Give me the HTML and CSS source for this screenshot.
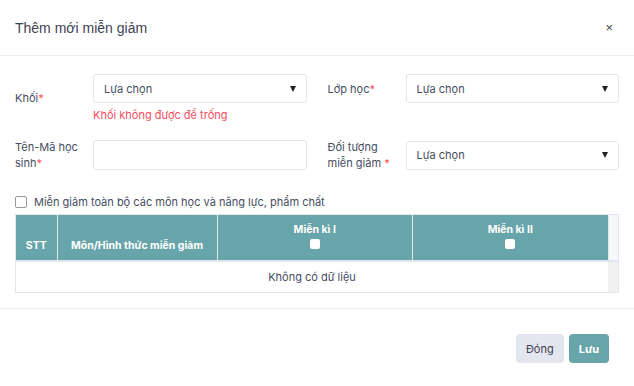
FILE: index.html
```html
<!DOCTYPE html>
<html lang="vi">
<head>
    <meta charset="UTF-8">
    <meta name="viewport" content="width=device-width, initial-scale=1.0">
    <title>Thêm mới miễn giảm</title>
    <link rel="stylesheet" href="styles.css">
</head>
<body>
    <div class="modal">
        <div class="modal-header">
            <h5 class="modal-title">Thêm mới miễn giảm</h5>
            <span class="close">×</span>
        </div>

        <div class="modal-body">
            <div class="form-row">
                <div class="field">
                    <label class="field-label required">Khối</label>
                    <div class="field-control">
                        <div class="select">Lựa chọn <span class="caret"></span></div>
                        <div class="error">Khối không được để trống</div>
                    </div>
                </div>
                <div class="field">
                    <label class="field-label required">Lớp học</label>
                    <div class="field-control">
                        <div class="select">Lựa chọn <span class="caret"></span></div>
                    </div>
                </div>
            </div>

            <div class="form-row">
                <div class="field">
                    <label class="field-label required">Tên-Mã học sinh</label>
                    <div class="field-control">
                        <div class="input"></div>
                    </div>
                </div>
                <div class="field">
                    <label class="field-label required spaced">Đối tượng miễn giảm</label>
                    <div class="field-control">
                        <div class="select">Lựa chọn <span class="caret"></span></div>
                    </div>
                </div>
            </div>

            <div class="check-row">
                <span class="checkbox"></span>
                <span>Miễn giảm toàn bộ các môn học và năng lực, phẩm chất</span>
            </div>

            <div class="table-wrap">
                <table class="table">
                    <thead>
                        <tr>
                            <th class="col-stt">STT</th>
                            <th class="col-mon">Môn/Hình thức miễn giảm</th>
                            <th class="col-ki">Miễn kì I<br><span class="th-check"></span></th>
                            <th class="col-ki">Miễn kì II<br><span class="th-check"></span></th>
                            <th class="gutter"></th>
                        </tr>
                    </thead>
                    <tbody>
                        <tr>
                            <td colspan="4" class="empty">Không có dữ liệu</td>
                            <td class="gutter"></td>
                        </tr>
                    </tbody>
                </table>
            </div>
        </div>

        <div class="modal-footer">
            <button class="btn btn-light">Đóng</button>
            <button class="btn btn-primary">Lưu</button>
        </div>
    </div>
</body>
</html>
```

FILE: styles.css
```css
body {
    margin: 0;
    font-family: Inter, "Liberation Sans", sans-serif;
    font-size: 11px;
    color: #464e5f;
    background: #fff;
}
.modal {
    width: 634px;
    height: 386px;
    display: flex;
    flex-direction: column;
}
.modal-header {
    height: 55px;
    flex-shrink: 0;
    display: flex;
    align-items: center;
    justify-content: space-between;
    padding: 0 21px 0 15px;
    border-bottom: 1px solid #ebedf3;
}
.modal-title {
    margin: 0;
    font-family: "Liberation Sans", Arial, sans-serif;
    font-size: 14px;
    font-weight: normal;
    color: #3f4254;
}
.close {
    font-family: "Liberation Sans", Arial, sans-serif;
    font-size: 13px;
    color: #444;
}
.modal-body {
    padding: 18px 15px 0 15px;
}
.form-row {
    display: flex;
    align-items: flex-start;
    gap: 21px;
    margin-bottom: 17px;
}
.field {
    flex: 1;
    display: flex;
    align-items: center;
}
.field-label {
    width: 78px;
    flex-shrink: 0;
    line-height: 16px;
    padding-right: 8px;
    box-sizing: border-box;
}
.required::after {
    content: "*";
    color: #f64e60;
}
.spaced::after {
    content: " *";
}
.field-control {
    flex: 1;
}
.select,
.input {
    height: 29px;
    border: 1px solid #e4e6ef;
    border-radius: 3px;
    box-sizing: border-box;
    display: flex;
    align-items: center;
    justify-content: space-between;
    padding: 0 10px;
}
.input {
    height: 30px;
}
.caret {
    width: 0;
    height: 0;
    border-left: 3.5px solid transparent;
    border-right: 3.5px solid transparent;
    border-top: 6px solid #222;
}
.error {
    color: #f64e60;
    margin-top: 6px;
    line-height: 13px;
}
.check-row {
    display: flex;
    align-items: center;
    gap: 7px;
    height: 14px;
    margin-top: 24px;
    margin-bottom: 5px;
}
.checkbox {
    width: 10px;
    height: 10px;
    border: 1px solid #999;
    border-radius: 2px;
}
.table-wrap {
    border: 1px solid #e4e6ef;
}
.table {
    width: 100%;
    border-collapse: collapse;
    table-layout: fixed;
}
.table th {
    background: #68a5aa;
    color: #fff;
    font-size: 10.5px;
    font-weight: bold;
    height: 43px;
    padding: 0 4px 6px;
    vertical-align: bottom;
    border-right: 1px solid #dfe9ea;
    border-bottom: 2px solid #e4e6ef;
    box-sizing: border-box;
    line-height: 16px;
}
.col-stt { width: 41px; }
.col-mon { width: 160px; }
.table th.col-ki {
    vertical-align: top;
    padding-top: 7px;
}
.th-check {
    display: inline-block;
    width: 10px;
    height: 10px;
    background: #fff;
    border-radius: 2px;
    margin-top: 1px;
}
.table th.gutter {
    width: 10px;
    background: #f7f8fb;
    border-right: none;
    border-left: 1px solid #e4e6ef;
    padding: 0;
}
.table td {
    height: 30px;
    text-align: center;
    padding: 0;
}
.table td.gutter {
    background: #f0f0f0;
}
.modal-footer {
    margin-top: auto;
    height: 78px;
    border-top: 1px solid #ebedf3;
    display: flex;
    justify-content: flex-end;
    align-items: flex-start;
    gap: 5px;
    padding: 25px 25px 0 0;
    box-sizing: border-box;
}
.btn {
    height: 29px;
    border: none;
    border-radius: 4px;
    font-family: Inter, "Liberation Sans", sans-serif;
    font-size: 11px;
    padding: 0 10px;
}
.btn-light {
    background: #e4e6ef;
    color: #3f4254;
}
.btn-primary {
    background: #68a5aa;
    color: #fff;
    font-weight: bold;
}
```
